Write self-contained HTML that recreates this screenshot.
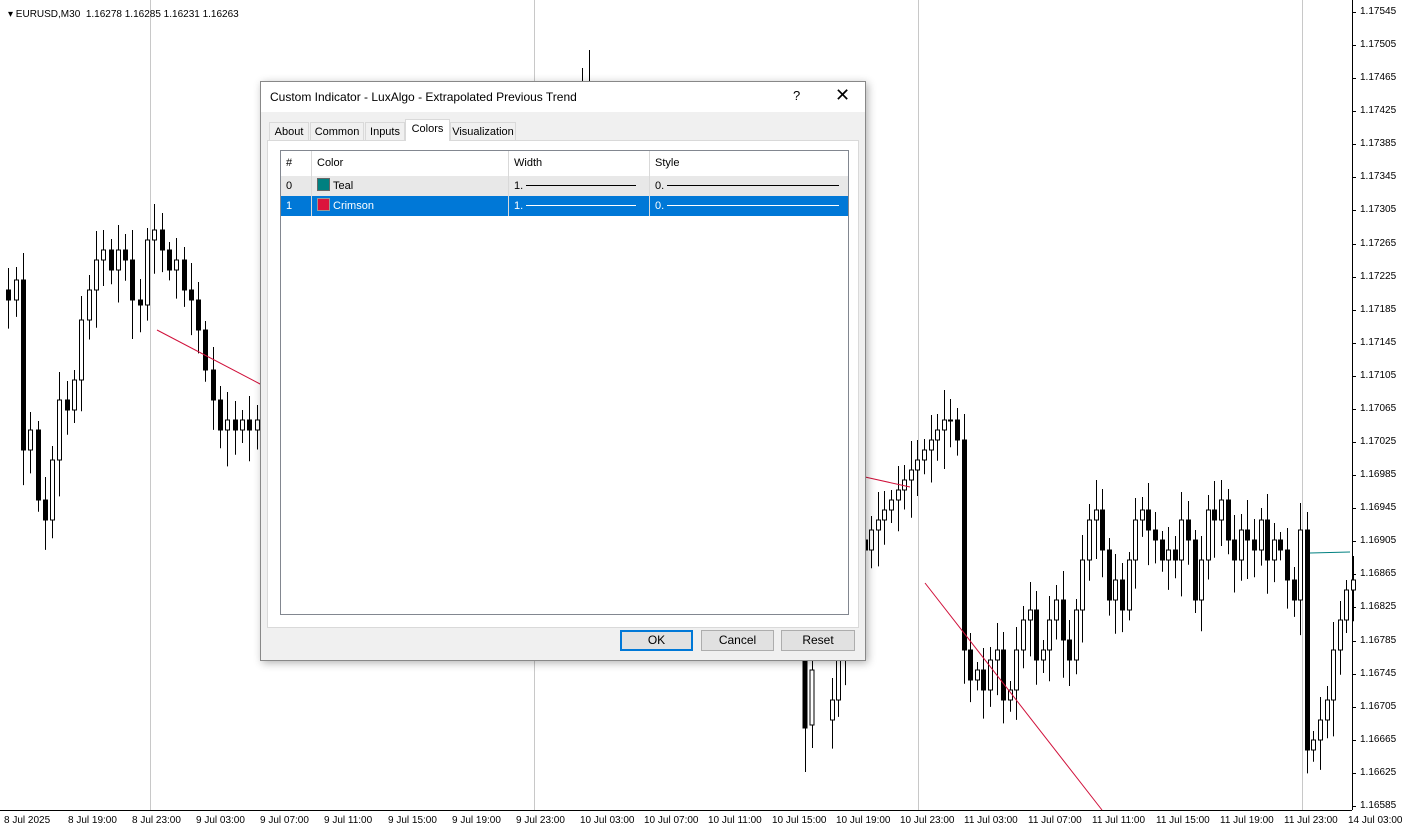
<!DOCTYPE html>
<html><head><meta charset="utf-8"><style>
body{margin:0;width:1403px;height:834px;overflow:hidden;background:#fff;font-family:"Liberation Sans",sans-serif;position:relative}
.ax{position:absolute;font-size:10px;color:#000}
.dlg{position:absolute;left:260px;top:81px;width:604px;height:578px;background:#f0f0f0;border:1px solid #888;box-shadow:2px 2px 8px rgba(0,0,0,.3);font-size:12px}
.title{height:30px;background:#fff;position:relative}
.tab{position:absolute;top:40px;height:18px;border:1px solid #d9d9d9;border-bottom:none;background:#f0f0f0;line-height:18px;text-align:center;font-size:11px}
.panel{position:absolute;left:6px;top:58px;width:590px;height:486px;background:#fff;border:1px solid #d9d9d9}
.lv{position:absolute;left:12px;top:9px;width:567px;height:463px;border:1px solid #828790;background:#fff}
.row{position:absolute;left:0;width:567px;height:20px;line-height:20px;font-size:11px}
.c{position:absolute;top:0;height:100%;border-right:1px solid #d9d9d9;padding-left:5px;box-sizing:border-box}
.btn{position:absolute;top:548px;height:21px;background:#e1e1e1;border:1px solid #adadad;text-align:center;line-height:19px;box-sizing:border-box;font-size:12px}
</style></head><body>
<svg id="ch" width="1403" height="834" style="position:absolute;left:0;top:0">
<g stroke="#c8c8c8" stroke-width="1"><line x1="150.5" y1="0" x2="150.5" y2="810"/><line x1="534.5" y1="0" x2="534.5" y2="810"/><line x1="918.5" y1="0" x2="918.5" y2="810"/><line x1="1302.5" y1="0" x2="1302.5" y2="810"/></g>
<line x1="1352.5" y1="0" x2="1352.5" y2="810" stroke="#000"/>
<line x1="0" y1="810.5" x2="1352" y2="810.5" stroke="#000"/>
<g id="cd"></g>
<line x1="589.5" y1="50" x2="589.5" y2="90" stroke="#000"/>
<line x1="582.5" y1="68" x2="582.5" y2="90" stroke="#000"/>
<line x1="805.5" y1="640" x2="805.5" y2="772" stroke="#000"/><rect x="803" y="660" width="4" height="68" fill="#000" stroke="#000"/>
<line x1="812.5" y1="640" x2="812.5" y2="748" stroke="#000"/><rect x="810" y="670" width="4" height="55" fill="#fff" stroke="#000"/>
<g stroke="#d0103a" stroke-width="1"><line x1="157" y1="330" x2="262" y2="385"/><line x1="865" y1="477" x2="910" y2="487"/><line x1="925" y1="583" x2="1102" y2="810"/></g>
<line x1="1310" y1="553" x2="1350" y2="552" stroke="#008080"/>
</svg>
<div class="ax" style="left:8px;top:9px">▾ EURUSD,M30&nbsp; 1.16278 1.16285 1.16231 1.16263</div>
<div id="pl"></div>
<div class="dlg">
<div class="title"><span style="position:absolute;left:9px;top:8px;font-size:12px">Custom Indicator - LuxAlgo - Extrapolated Previous Trend</span><span style="position:absolute;left:532px;top:6px;font-size:13px">?</span><span style="position:absolute;left:574px;top:3px;font-size:18px">✕</span></div>
<div class="tab" style="left:8px;width:38px">About</div>
<div class="tab" style="left:49px;width:52px">Common</div>
<div class="tab" style="left:104px;width:38px">Inputs</div>
<div class="tab" style="left:144px;width:43px;top:37px;height:21px;background:#fff;z-index:2">Colors</div>
<div class="tab" style="left:189px;width:64px">Visualization</div>
<div class="panel"><div class="lv">
<div class="row" style="top:0;height:25px;line-height:25px"><div class="c" style="left:0;width:31px">#</div><div class="c" style="left:31px;width:197px">Color</div><div class="c" style="left:228px;width:141px">Width</div><div class="c" style="left:369px;width:198px;border:none">Style</div></div>
<div class="row" style="top:25px;background:#e8e8e8"><div class="c" style="left:0;width:31px">0</div><div class="c" style="left:31px;width:197px"><span style="display:inline-block;width:11px;height:11px;background:#008080;border:1px solid #666;vertical-align:-2px;margin-right:3px"></span>Teal</div><div class="c" style="left:228px;width:141px">1. <span style="display:inline-block;width:110px;border-top:1px solid #000;vertical-align:3px"></span></div><div class="c" style="left:369px;width:198px;border:none">0. <span style="display:inline-block;width:172px;border-top:1px solid #000;vertical-align:3px"></span></div></div>
<div class="row" style="top:45px;background:#0078d7;color:#fff"><div class="c" style="left:0;width:31px">1</div><div class="c" style="left:31px;width:197px"><span style="display:inline-block;width:11px;height:11px;background:#dc143c;border:1px solid #999;vertical-align:-2px;margin-right:3px"></span>Crimson</div><div class="c" style="left:228px;width:141px">1. <span style="display:inline-block;width:110px;border-top:1px solid #fff;vertical-align:3px"></span></div><div class="c" style="left:369px;width:198px;border:none">0. <span style="display:inline-block;width:172px;border-top:1px solid #fff;vertical-align:3px"></span></div></div>
</div></div>
<div class="btn" style="left:359px;width:73px;border:2px solid #0078d7;line-height:17px">OK</div>
<div class="btn" style="left:440px;width:73px">Cancel</div>
<div class="btn" style="left:520px;width:74px">Reset</div>
</div>
<script>
var ns="http://www.w3.org/2000/svg",g=document.getElementById('cd');
function add(t,a){var e=document.createElementNS(ns,t);for(var k in a)e.setAttribute(k,a[k]);g.appendChild(e);}
function seg(x0,dx,ys){for(var i=1;i<ys.length;i++){var x=Math.round(x0+i*dx)+0.5,o=ys[i-1],c=ys[i],t=Math.min(o,c),b=Math.max(o,c),w=((i*37)%23)+8;
add('line',{x1:x,y1:t-w,x2:x,y2:b+w*1.3,stroke:'#000'});
add('rect',{x:x-2,y:t,width:4,height:Math.max(b-t,1),fill:c<o?'#fff':'#000',stroke:'#000'});}}
seg(1,7.3,[290,300,280,450,430,500,520,460,400,410,380,320,290,260,250,270,250,260,300,305,240,230,250,270,260,290,300,330,370,400,430,420,430,420,430,420,430,420,400,380]);
seg(825,6.6,[720,700,650,600,560,540,550,530,520,510,500,490,480,470,460,450,440,430,420,420,440,650,680,670,690,660,650,700,690,650,620,610,660,650,620,600,640,660,610,560,520,510,550,600,580,610,560,520,510,530,540,560,550,560,520,540,600,560,510,520,500,540,560,530,540,550,520,560,540,550,580,600,530,750,740,720,700,650,620,590,580]);
var pl=document.getElementById('pl'),s='';
for(var i=0;i<25;i++){var p=(1.17545-i*0.0004).toFixed(5),y=12+i*33.08;s+='<div class="ax" style="left:1360px;top:'+(y-6)+'px">'+p+'</div><div style="position:absolute;left:1352px;top:'+y+'px;width:4px;height:1px;background:#000"></div>';}
var tl=[[4,'8 Jul 2025'],[68,'8 Jul 19:00'],[132,'8 Jul 23:00'],[196,'9 Jul 03:00'],[260,'9 Jul 07:00'],[324,'9 Jul 11:00'],[388,'9 Jul 15:00'],[452,'9 Jul 19:00'],[516,'9 Jul 23:00'],[580,'10 Jul 03:00'],[644,'10 Jul 07:00'],[708,'10 Jul 11:00'],[772,'10 Jul 15:00'],[836,'10 Jul 19:00'],[900,'10 Jul 23:00'],[964,'11 Jul 03:00'],[1028,'11 Jul 07:00'],[1092,'11 Jul 11:00'],[1156,'11 Jul 15:00'],[1220,'11 Jul 19:00'],[1284,'11 Jul 23:00'],[1348,'14 Jul 03:00']];
tl.forEach(function(t){s+='<div class="ax" style="left:'+t[0]+'px;top:815px">'+t[1]+'</div>';});
pl.innerHTML=s;
</script>
</body></html>
